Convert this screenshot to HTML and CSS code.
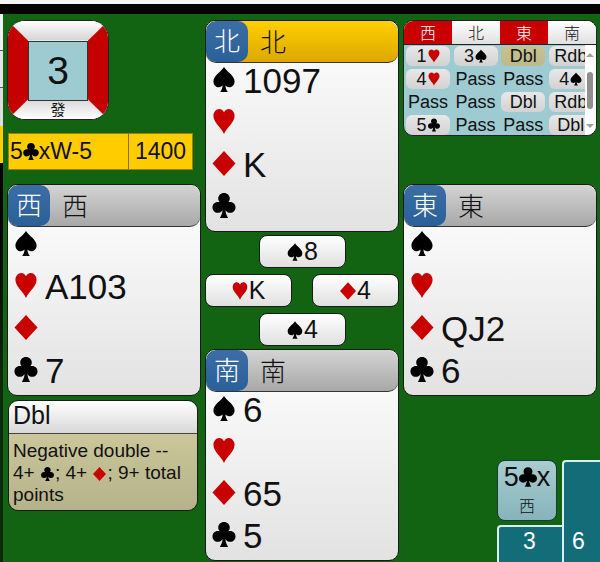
FILE: index.html
```html
<!DOCTYPE html>
<html lang="zh">
<head>
<meta charset="utf-8">
<title>Bridge</title>
<link rel="stylesheet" href="styles.css">
</head>
<body>
<svg class="defs" width="0" height="0" aria-hidden="true">
<defs>
<symbol id="s" viewBox="0 0 24 26"><path d="M12 0C9 5 1 9 1 15c0 4 3 6 5.500 6 2 0 3.500-1 4-2C10.500 22 9.500 24 8 26h8c-1.500-2-2.500-4-2.500-7 .5 1 2 2 4 2C20 21 23 19 23 15 23 9 15 5 12 0z"/></symbol>
<symbol id="h" viewBox="0 0 24 26"><path d="M12 26C9 19 1 14 1 7c0-4 3-7 6-7 2.500 0 4 1.500 5 3.500C13 1.500 14.500 0 17 0c3 0 6 3 6 7 0 7-8 12-11 19z"/></symbol>
<symbol id="d" viewBox="0 0 24 26"><path d="M12 0 24 13 12 26 0 13z"/></symbol>
<symbol id="c" viewBox="0 0 24 26"><path d="M12 0c3.500 0 6 2.500 6 5.700 0 1.700-.7 3-1.600 4 .6-.2 1.300-.3 2-.3 3.200 0 5.600 2.500 5.600 5.600s-2.400 5.600-5.400 5.600c-2.200 0-4-1-5.100-3 .2 3.400 1.300 5.700 2.800 8.400H7.700c1.500-2.700 2.600-5 2.800-8.400-1.100 2-2.900 3-5.100 3C2.400 20.600 0 18.100 0 15s2.400-5.600 5.600-5.600c.7 0 1.400.1 2 .3-.9-1-1.600-2.300-1.600-4C6 2.500 8.500 0 12 0z"/></symbol>
</defs>
</svg>
<div class="topstrip"></div>
<div class="edge"><i class="e1"></i><i class="e2"></i><i class="e3"></i><i class="e4"></i><i class="e5"></i></div>
<main class="board">
  <section class="col">
    <div class="vul">
      <div class="vn"></div><div class="vs"></div><div class="ve"></div><div class="vw"></div>
      <div class="vnum">3</div>
      <div class="vdealer">發</div>
    </div>
    <div class="score"><span class="sc1">5<svg class="su su-c"><use href="#c"/></svg>xW-5</span><span class="sc2">1400</span></div>
    <div class="hand west">
      <div class="hhead grey"><span class="seat">西</span><span class="pname">西</span></div>
      <div class="row"><svg class="si"><use href="#s"/></svg></div>
      <div class="row"><svg class="si red"><use href="#h"/></svg><span class="cards">A103</span></div>
      <div class="row"><svg class="si red"><use href="#d"/></svg></div>
      <div class="row"><svg class="si"><use href="#c"/></svg><span class="cards">7</span></div>
    </div>
    <div class="expl">
      <div class="xhead">Dbl</div>
      <div class="xbody">Negative double --<br>4+ <svg class="mini"><use href="#c"/></svg>; 4+ <svg class="mini red"><use href="#d"/></svg>; 9+ total points</div>
    </div>
  </section>
  <section class="col">
    <div class="hand">
      <div class="hhead gold"><span class="seat">北</span><span class="pname">北</span></div>
      <div class="row"><svg class="si"><use href="#s"/></svg><span class="cards">1097</span></div>
      <div class="row"><svg class="si red"><use href="#h"/></svg></div>
      <div class="row"><svg class="si red"><use href="#d"/></svg><span class="cards">K</span></div>
      <div class="row"><svg class="si"><use href="#c"/></svg></div>
    </div>
    <div class="tricks">
      <div class="card cn"><svg class="cs"><use href="#s"/></svg>8</div>
      <div class="card cw"><svg class="cs red"><use href="#h"/></svg>K</div>
      <div class="card ce"><svg class="cs red"><use href="#d"/></svg>4</div>
      <div class="card cs2"><svg class="cs"><use href="#s"/></svg>4</div>
    </div>
    <div class="hand">
      <div class="hhead grey"><span class="seat">南</span><span class="pname">南</span></div>
      <div class="row"><svg class="si"><use href="#s"/></svg><span class="cards">6</span></div>
      <div class="row"><svg class="si red"><use href="#h"/></svg></div>
      <div class="row"><svg class="si red"><use href="#d"/></svg><span class="cards">65</span></div>
      <div class="row"><svg class="si"><use href="#c"/></svg><span class="cards">5</span></div>
    </div>
  </section>
  <section class="col">
    <div class="auction">
      <div class="ahead"><span class="ar">西</span><span>北</span><span class="ar">東</span><span>南</span></div>
      <div class="abody">
        <div class="bids">
          <span class="bid">1<svg class="bs red"><use href="#h"/></svg></span><span class="bid">3<svg class="bs"><use href="#s"/></svg></span><span class="bid sel">Dbl</span><span class="bid">Rdb</span>
          <span class="bid">4<svg class="bs red"><use href="#h"/></svg></span><span class="pass">Pass</span><span class="pass">Pass</span><span class="bid">4<svg class="bs"><use href="#s"/></svg></span>
          <span class="pass">Pass</span><span class="pass">Pass</span><span class="bid">Dbl</span><span class="bid">Rdb</span>
          <span class="bid">5<svg class="bs"><use href="#c"/></svg></span><span class="pass">Pass</span><span class="pass">Pass</span><span class="bid">Dbl</span>
        </div>
        <div class="sbar"><b class="up"></b><b class="thumb"></b><b class="down"></b></div>
      </div>
    </div>
    <div class="hand east">
      <div class="hhead grey"><span class="seat">東</span><span class="pname">東</span></div>
      <div class="row"><svg class="si"><use href="#s"/></svg></div>
      <div class="row"><svg class="si red"><use href="#h"/></svg></div>
      <div class="row"><svg class="si red"><use href="#d"/></svg><span class="cards">QJ2</span></div>
      <div class="row"><svg class="si"><use href="#c"/></svg><span class="cards">6</span></div>
    </div>
    <div class="corner">
      <div class="contract">
        <div class="cline">5<svg class="ccl"><use href="#c"/></svg>x</div>
        <div class="cdecl">西</div>
      </div>
      <div class="tk tk3">3</div>
      <div class="tk tk6">6</div>
    </div>
  </section>
</main>
</body>
</html>
```

FILE: styles.css
```css
* { box-sizing: border-box; }
html, body { margin: 0; padding: 0; }
body {
  width: 600px;
  height: 562px;
  overflow: hidden;
  background: #126312;
  color: #111;
  font-family: "Liberation Sans", "Noto Sans CJK TC", sans-serif;
  position: relative;
}
.defs { position: absolute; }
.topstrip { height: 14px; background: #000; border-top: 4px solid #f4f4f4; }
.edge { position: absolute; left: 0; top: 14px; width: 3px; height: 548px; display: flex; flex-direction: column; }
.edge i { display: block; }
.e1 { height: 37px; background: #f0f0f0; border-bottom: 1px solid #555; }
.e2 { height: 37px; background: #e4e4e4; border-bottom: 1px solid #555; }
.e3 { height: 38px; background: #ddd; }
.e4 { height: 37px; background: #ffcc00; }
.e5 { flex: 1; background: linear-gradient(#000, #000 40px, #0a2a0a 220px); }
.board { display: grid; grid-template-columns: 194px 194px 194px; column-gap: 4px; padding: 6px 0 0 7px; }
.col { display: flex; flex-direction: column; height: 542px; }

.vul { position: relative; width: 102px; height: 100px; border-radius: 18px; overflow: hidden; border: 1px solid #222; flex: none; background: #fff; }
.vn, .vs, .ve, .vw { position: absolute; }
.vn { inset: 0; background: linear-gradient(#fff, #d4d4d4 20%); clip-path: polygon(0 0, 100% 0, 80% 20%, 20% 20%); }
.vs { inset: 0; background: linear-gradient(#d8d8d8 80%, #fff); clip-path: polygon(20% 80%, 80% 80%, 100% 100%, 0 100%); }
.ve { inset: 0; background: #c40000; clip-path: polygon(100% 0, 100% 100%, 80% 80%, 80% 20%); }
.vw { inset: 0; background: #c40000; clip-path: polygon(0 0, 20% 20%, 20% 80%, 0 100%); }
.vnum { position: absolute; left: 20px; top: 20px; width: 60px; height: 60px; background: #9dcbd1; border: 1px solid #333; font-size: 39px; line-height: 58px; text-align: center; }
.vdealer { position: absolute; left: 20px; width: 60px; top: 80px; font-size: 15px; line-height: 18px; text-align: center; }

.score { margin: 13px 0 0 1px; width: 185px; height: 37px; flex: none; display: flex; background: #ffcc00; border: 1px solid #a08000; font-size: 23px; line-height: 35px; }
.sc1 { width: 120px; padding-left: 1px; border-right: 1px solid #8a6e00; white-space: nowrap; }
.sc2 { flex: 1; text-align: center; }
.su { width: 16px; height: 17px; vertical-align: -1px; }

.hand { background: linear-gradient(#fff, #e2e2e2); border: 1px solid #1a1a1a; border-radius: 10px; height: 212px; flex: none; overflow: hidden; font-size: 35px; }
.west { margin-top: 14px; }
.east { margin-top: 48px; }
.hhead { height: 42px; display: flex; align-items: center; border-bottom: 1px solid #333; border-radius: 10px; flex: none; }
.gold { background: linear-gradient(#ffcf00, #dca800); }
.grey { background: linear-gradient(#d4d4d4, #a8a8a8); }
.seat { width: 42px; height: 41px; border-radius: 10px; background: linear-gradient(#3b6ea5, #2a5f98); color: #fff; text-align: center; font-size: 26px; font-weight: 300; line-height: 38px; flex: none; font-family: "Noto Sans CJK TC", sans-serif; }
.pname { margin: 0 0 2px 12px; font-size: 26px; font-weight: 300; font-family: "Noto Sans CJK TC", sans-serif; }
.row { height: 42px; display: flex; align-items: center; padding-left: 6px; }
.hhead + .row { margin-top: -5px; }
.cards { margin-top: 4px; }
.si { width: 24px; height: 25px; margin-right: 7px; flex: none; }
svg { fill: #000; }
svg.red { fill: #c80000; }

.tricks { height: 117px; flex: none; position: relative; font-size: 25px; }
.card { position: absolute; width: 87px; height: 33px; background: linear-gradient(#fff, #e0e0e0); border: 1px solid #1a1a1a; border-radius: 8px; display: flex; align-items: center; justify-content: center; }
.cn { left: 54px; top: 3px; }
.cw { left: 0; top: 42px; }
.ce { right: 0; top: 42px; }
.cs2 { left: 54px; top: 81px; }
.cs { width: 16px; height: 18px; margin-right: 1px; }

.auction { height: 116px; width: 194px; flex: none; border-radius: 10px; overflow: hidden; border: 1px solid #222; background: #9dcbd1; }
.ahead { display: grid; grid-template-columns: repeat(4, 48px); height: 24px; font-size: 16px; font-weight: 300; line-height: 23px; text-align: center; font-family: "Noto Sans CJK TC", sans-serif; background: #fff; }
.ahead span { background: linear-gradient(#fff, #e0e0e0); border-bottom: 1px solid #222; }
.ahead .ar { background: #c80000; color: #fff; }
.abody { display: flex; height: 91px; }
.bids { flex: none; width: 181px; display: grid; grid-template-columns: repeat(4, 47.600px); grid-auto-rows: 23px; font-size: 18px; line-height: 20px; overflow: hidden; }
.bid, .pass { display: flex; align-items: center; justify-content: center; height: 20px; margin: 1px 0 0 2px; width: 44px; white-space: nowrap; }
.bid { background: linear-gradient(#e8e8e8, #d2d2d2); border-radius: 6px; }
.sel { background: linear-gradient(#c6c292, #bdb98a); }
.bs { width: 12px; height: 14px; margin-left: 1px; }
.sbar { position: relative; width: 12px; background: #fff; }
.thumb { position: absolute; left: 2px; top: 27px; width: 6px; height: 37px; background: #8f8f8f; border-radius: 3px; }
.up, .down { position: absolute; left: 1px; width: 0; height: 0; border-left: 4px solid transparent; border-right: 4px solid transparent; }
.up { top: 8px; border-bottom: 4px solid #a0a0a0; }
.down { bottom: 8px; border-top: 4px solid #a0a0a0; }

.expl { margin-top: 4px; width: 190px; margin-left: 1px; border: 1px solid #1a1a1a; border-radius: 10px; overflow: hidden; height: 111px; flex: none; }
.xhead { height: 33px; background: linear-gradient(#fff, #d8d8d8); border-bottom: 1px solid #444; font-size: 25px; line-height: 29px; padding-left: 4px; }
.xbody { padding: 6px 0 0 4px; background: linear-gradient(#cbc79a, #b5b18a); height: 77px; font-size: 19px; line-height: 22px; }
.mini { width: 13px; height: 14px; margin: 0 1px; vertical-align: -2px; }

.corner { position: relative; flex: 1; }
.contract { position: absolute; left: 94px; top: 64px; width: 60px; height: 61px; border: 1px solid #1a3a3a; border-radius: 8px; background: linear-gradient(#a9cdd0, #86b4ba); text-align: center; }
.cline { font-size: 27px; line-height: 32px; white-space: nowrap; }
.ccl { width: 18px; height: 20px; vertical-align: -1px; }
.cdecl { font-size: 16px; font-weight: 300; line-height: 24px; font-family: "Noto Sans CJK TC", sans-serif; }
.tk { position: absolute; background: #126d78; color: #fff; border-left: 2px solid #d8eef0; border-top: 2px solid #d8eef0; border-radius: 4px 0 0 0; font-size: 23px; text-align: center; }
.tk3 { left: 94px; top: 129px; width: 65px; height: 37px; line-height: 29px; padding-right: 2px; }
.tk6 { left: 159px; top: 64px; width: 38px; height: 102px; line-height: 32px; padding: 63px 7px 0 0; }
```
